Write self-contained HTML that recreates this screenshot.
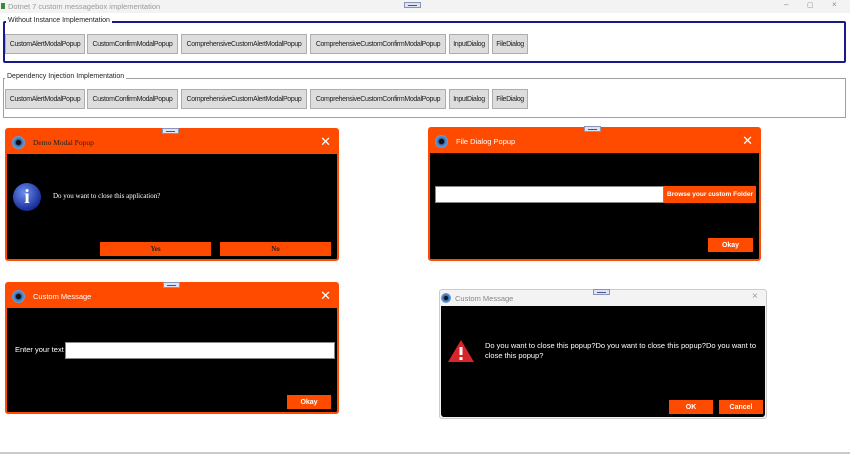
<!DOCTYPE html>
<html><head><meta charset="utf-8"><style>
*{margin:0;padding:0;box-sizing:border-box}
body{width:850px;height:454px;background:#fff;position:relative;overflow:hidden;font-family:"Liberation Sans",sans-serif}
.a{position:absolute}
.btn{position:absolute;background:#dddddd;border:1px solid #adadad;font-size:7px;color:#222;display:flex;align-items:center;justify-content:center;white-space:nowrap;letter-spacing:-0.35px;overflow:hidden}
.grp{position:absolute;left:3px;width:843px}
.lbl{position:absolute;background:#fff;font-size:7px;color:#222;padding:0 2px;left:1px;top:-6px}
.handle{position:absolute;width:17px;height:6px;background:#dde3f3;border:1px solid #8a93b8}
.handle:after{content:"";position:absolute;left:3px;right:3px;top:2px;height:1px;background:#4a5290}
.pop{position:absolute;background:#000;border:2px solid #ff4b00;border-radius:3px}
.tb{position:absolute;left:0;right:0;top:0;background:#ff4b00;color:#fff;font-size:7.5px;display:flex;align-items:center}
.ic{width:13px;height:13px;border-radius:50%;background:radial-gradient(circle,#111 25%,#3a6fb0 35%,#6aa0e0 70%,#2a4f8a 100%);margin:0 8px 0 5px}
.x{position:absolute;right:6px;font-size:13px;color:#fff}
.ob{position:absolute;background:#ff4b00;color:#fff;font-weight:bold;font-size:7px;display:flex;align-items:center;justify-content:center;white-space:nowrap}
</style></head><body>
<div class="a" style="left:0;top:0;width:850px;height:13px;background:#f3f3f3"></div>
<div class="a" style="left:1px;top:3px;width:4px;height:6px;background:#3a8a3a"></div>
<div class="a" style="left:8px;top:2px;font-size:7.5px;color:#999">Dotnet 7 custom messagebox implementation</div>
<div class="handle" style="left:404px;top:2px"></div>
<div class="a" style="left:784px;top:0;font-size:8px;color:#888">–</div>
<div class="a" style="left:807px;top:1px;font-size:7px;color:#888">▢</div>
<div class="a" style="left:832px;top:0;font-size:8px;color:#888">×</div>

<div class="grp" style="top:21px;height:42px;border:2px solid #1a1a8a;border-radius:2px"><div class="lbl">Without Instance Implementation</div></div>
<div class="grp" style="top:78px;height:40px;border:1px solid #a0a0a0"><div class="lbl">Dependency Injection Implementation</div></div>

<div class="btn" style="left:5px;top:34px;width:80px;height:20px">CustomAlertModalPopup</div>
<div class="btn" style="left:87px;top:34px;width:91px;height:20px">CustomConfirmModalPopup</div>
<div class="btn" style="left:181px;top:34px;width:126px;height:20px">ComprehensiveCustomAlertModalPopup</div>
<div class="btn" style="left:310px;top:34px;width:136px;height:20px">ComprehensiveCustomConfirmModalPopup</div>
<div class="btn" style="left:449px;top:34px;width:40px;height:20px">InputDialog</div>
<div class="btn" style="left:492px;top:34px;width:36px;height:20px">FileDialog</div>

<div class="btn" style="left:5px;top:89px;width:80px;height:20px">CustomAlertModalPopup</div>
<div class="btn" style="left:87px;top:89px;width:91px;height:20px">CustomConfirmModalPopup</div>
<div class="btn" style="left:181px;top:89px;width:126px;height:20px">ComprehensiveCustomAlertModalPopup</div>
<div class="btn" style="left:310px;top:89px;width:136px;height:20px">ComprehensiveCustomConfirmModalPopup</div>
<div class="btn" style="left:449px;top:89px;width:40px;height:20px">InputDialog</div>
<div class="btn" style="left:492px;top:89px;width:36px;height:20px">FileDialog</div>

<!-- popup 1 -->
<div class="pop" style="left:5px;top:128px;width:334px;height:133px">
<div class="tb" style="height:24px;font-family:'Liberation Serif',serif;font-size:7.5px"><div class="ic"></div><span style="color:#222">Demo Modal Popup</span><span class="x">✕</span></div>
<div class="a" style="left:6px;top:53px;width:28px;height:28px;border-radius:50%;background:radial-gradient(circle at 40% 35%,#6a8ef0,#1a2f9a 70%,#0a1560);color:#fff;font-family:'Liberation Serif',serif;font-weight:bold;font-size:20px;text-align:center;line-height:28px">i</div>
<div class="a" style="left:46px;top:62px;color:#fff;font-family:'Liberation Serif',serif;font-size:7px">Do you want to close this application?</div>
<div class="ob" style="left:93px;top:112px;width:111px;height:14px;font-family:'Liberation Serif',serif;color:#222">Yes</div>
<div class="ob" style="left:213px;top:112px;width:111px;height:14px;font-family:'Liberation Serif',serif;color:#222">No</div>
</div>
<div class="handle" style="left:162px;top:128px"></div>

<!-- popup 2 -->
<div class="pop" style="left:428px;top:127px;width:333px;height:134px">
<div class="tb" style="height:24px"><div class="ic"></div>File Dialog Popup<span class="x">✕</span></div>
<div class="a" style="left:5px;top:57px;width:229px;height:17px;background:#fff;border:1px solid #888"></div>
<div class="ob" style="left:234px;top:57px;width:92px;height:17px;font-size:6.5px">Browse your custom Folder</div>
<div class="ob" style="left:278px;top:109px;width:45px;height:14px">Okay</div>
</div>
<div class="handle" style="left:584px;top:126px"></div>

<!-- popup 3 -->
<div class="pop" style="left:5px;top:282px;width:334px;height:132px">
<div class="tb" style="height:24px"><div class="ic"></div>Custom Message<span class="x">✕</span></div>
<div class="a" style="left:8px;top:61px;color:#fff;font-size:7.5px">Enter your text</div>
<div class="a" style="left:58px;top:58px;width:270px;height:17px;background:#fff;border:1px solid #888"></div>
<div class="ob" style="left:280px;top:111px;width:44px;height:14px">Okay</div>
</div>
<div class="handle" style="left:163px;top:282px"></div>

<!-- popup 4 -->
<div class="a" style="left:439px;top:289px;width:328px;height:130px;background:#f3f3f3;border:1px solid #ccc;border-radius:3px"></div>
<div class="ic a" style="left:441px;top:293px;margin:0;width:10px;height:10px"></div>
<div class="a" style="left:455px;top:294px;font-size:7.5px;color:#888">Custom Message</div>
<div class="a" style="left:752px;top:291px;font-size:10px;color:#999">×</div>
<div class="a" style="left:441px;top:306px;width:324px;height:111px;background:#000;border-radius:0 0 3px 3px"></div>
<svg class="a" style="left:447px;top:339px" width="28" height="24"><polygon points="14,1 27,23 1,23" fill="#d8252a"/><rect x="12.5" y="8" width="3" height="8" fill="#fff"/><rect x="12.5" y="18" width="3" height="3" fill="#fff"/></svg>
<div class="a" style="left:485px;top:341px;width:275px;color:#fff;font-size:7.5px;line-height:10px">Do you want to close this popup?Do you want to close this popup?Do you want to close this popup?</div>
<div class="ob" style="left:669px;top:400px;width:44px;height:14px">OK</div>
<div class="ob" style="left:719px;top:400px;width:44px;height:14px">Cancel</div>
<div class="handle" style="left:593px;top:289px"></div>

<div class="a" style="left:0;top:452px;width:850px;height:2px;background:#c8ccd0"></div>
</body></html>
